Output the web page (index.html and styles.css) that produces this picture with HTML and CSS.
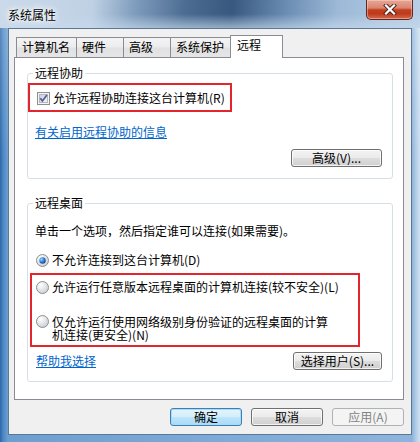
FILE: index.html
```html
<!DOCTYPE html>
<html lang="zh-CN">
<head>
<meta charset="utf-8">
<title>系统属性</title>
<link rel="stylesheet" href="styles.css">
</head>
<body>
<div class="window">
  <div class="titlebar">
    <span class="title">系统属性</span>
    <button class="close" aria-label="关闭">
      <svg width="14" height="11" viewBox="0 0 14 11" aria-hidden="true">
        <path d="M3 1.5 L11 9.5 M11 1.5 L3 9.5" stroke="#4a211b" stroke-width="4" stroke-linecap="square" fill="none"/>
        <path d="M3 1.5 L11 9.5 M11 1.5 L3 9.5" stroke="#ffffff" stroke-width="2.2" stroke-linecap="square" fill="none"/>
      </svg>
    </button>
  </div>
  <div class="client">
    <div class="tabs">
      <div class="tab">计算机名</div>
      <div class="tab">硬件</div>
      <div class="tab">高级</div>
      <div class="tab">系统保护</div>
      <div class="tab tab-active">远程</div>
    </div>
    <div class="panel">
      <fieldset class="group group-assist">
        <legend>远程协助</legend>
        <label class="option highlight highlight-check">
          <svg class="mark" width="13" height="13" viewBox="0 0 13 13" aria-hidden="true">
            <defs>
              <linearGradient id="cbfill" x1="0" y1="0" x2="1" y2="1">
                <stop offset="0" stop-color="#c9ccd2"/>
                <stop offset="1" stop-color="#f7f7f7"/>
              </linearGradient>
            </defs>
            <rect x="0.5" y="0.5" width="12" height="12" fill="#f4f4f4" stroke="#8e8f8f"/>
            <rect x="2.5" y="2.5" width="8" height="8" fill="url(#cbfill)" stroke="#b4b8be"/>
            <path d="M3.3 6.3 L5.4 8.9 L9.9 3.1" fill="none" stroke="#4b5d98" stroke-width="1.7"/>
          </svg>
          <span>允许远程协助连接这台计算机(R)</span>
        </label>
        <a class="link link-info" href="#">有关启用远程协助的信息</a>
        <div class="row row-end">
          <button class="btn btn-adv">高级(V)...</button>
        </div>
      </fieldset>

      <fieldset class="group group-desktop">
        <legend>远程桌面</legend>
        <p class="desc">单击一个选项，然后指定谁可以连接(如果需要)。</p>
        <label class="option option-first">
          <svg class="mark" width="13" height="13" viewBox="0 0 13 13" aria-hidden="true">
            <defs>
              <radialGradient id="rfill1" cx="0.35" cy="0.3" r="0.8">
                <stop offset="0" stop-color="#ffffff"/>
                <stop offset="1" stop-color="#c6cbd2"/>
              </radialGradient>
              <radialGradient id="rdot1" cx="0.35" cy="0.35" r="0.75">
                <stop offset="0" stop-color="#97d8ff"/>
                <stop offset="0.55" stop-color="#2b7ccd"/>
                <stop offset="1" stop-color="#0c3b7d"/>
              </radialGradient>
            </defs>
            <circle cx="6.5" cy="6.5" r="6" fill="url(#rfill1)" stroke="#8e8f8f"/>
            <circle cx="6.5" cy="6.5" r="3.2" fill="url(#rdot1)"/>
          </svg>
          <span>不允许连接到这台计算机(D)</span>
        </label>
        <div class="highlight highlight-radios">
          <label class="option">
            <svg class="mark" width="13" height="13" viewBox="0 0 13 13" aria-hidden="true">
              <defs>
                <radialGradient id="rfill2" cx="0.35" cy="0.3" r="0.8">
                  <stop offset="0" stop-color="#ffffff"/>
                  <stop offset="1" stop-color="#c6cbd2"/>
                </radialGradient>
              </defs>
              <circle cx="6.5" cy="6.5" r="6" fill="url(#rfill2)" stroke="#8e8f8f"/>
            </svg>
            <span>允许运行任意版本远程桌面的计算机连接(较不安全)(L)</span>
          </label>
          <label class="option option-multi">
            <svg class="mark" width="13" height="13" viewBox="0 0 13 13" aria-hidden="true">
              <defs>
                <radialGradient id="rfill3" cx="0.35" cy="0.3" r="0.8">
                  <stop offset="0" stop-color="#ffffff"/>
                  <stop offset="1" stop-color="#c6cbd2"/>
                </radialGradient>
              </defs>
              <circle cx="6.5" cy="6.5" r="6" fill="url(#rfill3)" stroke="#8e8f8f"/>
            </svg>
            <span class="wrap-text">仅允许运行使用网络级别身份验证的远程桌面的计算机连接(更安全)(N)</span>
          </label>
        </div>
        <div class="row row-between">
          <a class="link" href="#">帮助我选择</a>
          <button class="btn btn-users">选择用户(S)...</button>
        </div>
      </fieldset>
    </div>
    <div class="actions">
      <button class="btn btn-action btn-default">确定</button>
      <button class="btn btn-action">取消</button>
      <button class="btn btn-action" disabled>应用(A)</button>
    </div>
  </div>
</div>
</body>
</html>
```

FILE: styles.css
```css
* {
  box-sizing: border-box;
}

html,
body {
  margin: 0;
  padding: 0;
}

body {
  width: 420px;
  height: 442px;
  overflow: hidden;
  font-family: "Noto Sans CJK SC", "Noto Sans", sans-serif;
  font-size: 12px;
  color: #000;
}

.window {
  width: 420px;
  height: 442px;
  display: flex;
  flex-direction: column;
  padding-bottom: 7px;
  background:
    linear-gradient(180deg, rgba(255, 255, 255, 0.25) 0, rgba(255, 255, 255, 0) 160px),
    linear-gradient(90deg, #2d66a6 0, #4a86c3 3px, #6c9fd1 8px, #8db4dc 412px, #b3cde8 416px, #d0e1f1 420px);
}

.titlebar {
  height: 28px;
  flex: none;
  display: flex;
  justify-content: space-between;
  align-items: flex-start;
  padding: 0 7px 0 8px;
  background:
    linear-gradient(180deg, rgba(255, 255, 255, 0) 0, rgba(255, 255, 255, 0) 50%, rgba(200, 218, 236, 0.65) 100%),
    linear-gradient(96deg, #cbdaea 0%, #bfd1e4 22%, #7f9dbd 32%, #4c6c92 44%, #38587f 55%, #6b8db3 68%, #9db9d7 80%, #b8cfe6 100%);
}

.title {
  margin-top: 8px;
  line-height: 14px;
  text-shadow: 0 0 6px #fff, 0 0 10px rgba(255, 255, 255, 0.9), 0 0 3px #fff;
}

.close {
  width: 47px;
  height: 20px;
  padding: 0;
  border: 1px solid #5e2a20;
  border-top: 0;
  border-radius: 0 0 5px 5px;
  background: linear-gradient(180deg, #e7a896 0%, #d9846f 42%, #c4401f 52%, #bd3a1c 72%, #d8694e 100%);
  box-shadow: inset 0 0 0 1px rgba(255, 220, 210, 0.45);
  display: flex;
  align-items: center;
  justify-content: center;
}

.close svg {
  display: block;
}

.client {
  flex: 1;
  margin: 0 8px;
  border: 1px solid #5f7891;
  background: #f0f0f0;
  padding: 6px 7px 0 5px;
  display: flex;
  flex-direction: column;
}

.tabs {
  height: 22px;
  flex: none;
  display: flex;
  align-items: flex-end;
  padding-left: 2px;
  position: relative;
  z-index: 1;
}

.tab {
  height: 20px;
  min-width: 48px;
  line-height: 18px;
  padding: 0 6px 0 5px;
  margin-right: -1px;
  border: 1px solid #898c95;
  border-bottom: 0;
  background: linear-gradient(180deg, #f4f4f4 0%, #ececec 48%, #e1e1e1 52%, #e6e6e6 100%);
  white-space: nowrap;
}

.tab-active {
  height: 23px;
  min-width: 53px;
  margin-bottom: -1px;
  padding-left: 6px;
  background: #fff;
}

.panel {
  height: 343px;
  flex: none;
  border: 1px solid #898c95;
  background: #fff;
  padding: 0 10px 0 12px;
}

.group {
  margin: 8px 0 0;
  min-width: 0;
  border: 1px solid #d5dfe5;
  border-radius: 3px;
  padding: 3px 10px 11px 7px;
}

.group legend {
  padding: 0 2px;
  margin-left: -2px;
  line-height: 14px;
}

.group-desktop {
  margin-top: 17px;
  padding-top: 14px;
}

.option {
  display: flex;
  align-items: center;
  gap: 3px;
  line-height: 14px;
  white-space: nowrap;
}

.mark {
  display: block;
  flex: none;
  margin-left: 1px;
}

.highlight {
  border: 2px solid #e3262e;
}

.highlight-check {
  width: fit-content;
  margin-left: -7px;
  padding: 6px 5px 5px 6px;
}

.highlight-radios {
  width: 330px;
  margin-top: 6px;
  margin-left: -5px;
  padding: 5px 4px 4px 3px;
}

.option-first {
  margin-top: 15px;
}

.option-multi {
  margin-top: 21px;
  align-items: flex-start;
  line-height: 13px;
}

.wrap-text {
  white-space: normal;
  max-width: 285px;
}

.desc {
  margin: 0;
  line-height: 14px;
  white-space: nowrap;
}

.link {
  color: #0066cc;
  text-decoration: underline;
  line-height: 14px;
}

.link-info {
  display: block;
  width: fit-content;
  margin-top: 13px;
}

.row {
  display: flex;
  align-items: center;
}

.row-end {
  justify-content: flex-end;
  margin-top: 10px;
}

.row-between {
  justify-content: space-between;
  margin-top: 5px;
  padding-left: 1px;
}

.btn {
  font-family: inherit;
  font-size: 12px;
  color: #000;
  height: 18px;
  line-height: 16px;
  padding: 0;
  border: 1px solid #707070;
  border-radius: 3px;
  background: linear-gradient(180deg, #f3f3f3 0%, #ebebeb 48%, #dddddd 52%, #cfcfcf 100%);
  box-shadow: inset 0 0 0 1px rgba(255, 255, 255, 0.75);
  white-space: nowrap;
}

.btn-adv {
  width: 91px;
}

.btn-users {
  width: 89px;
}

.actions {
  display: flex;
  justify-content: flex-end;
  gap: 9px;
  margin-top: 8px;
}

.btn-action {
  width: 72px;
}

.btn-default {
  border-color: #3c7fb1;
  background: linear-gradient(180deg, #e5f4fc 0%, #d4eefc 48%, #bce4fa 52%, #a9daf6 100%);
  box-shadow: inset 0 0 0 1px #a6dcf9;
}

.btn:disabled {
  border-color: #adb2b5;
  background: #f4f4f4;
  color: #838383;
  box-shadow: none;
}
```
